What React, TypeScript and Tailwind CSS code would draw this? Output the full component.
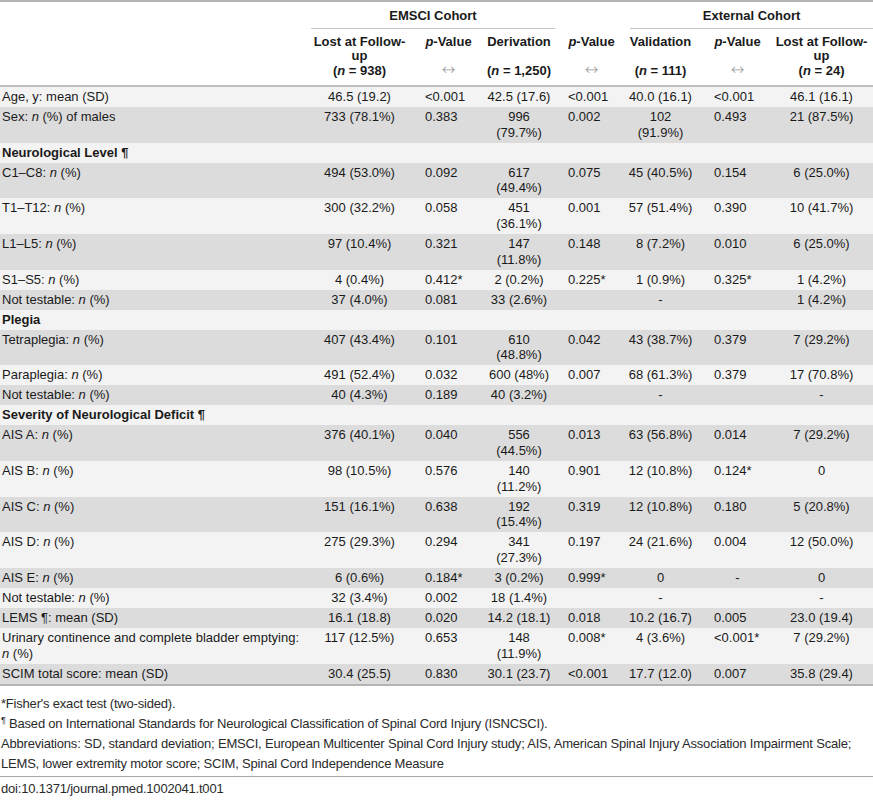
import React from "react";

type Row =
  | { kind: "section"; label: React.ReactNode }
  | { kind: "data"; label: React.ReactNode; values: string[] };

const n = <i>n</i>;

const rows: Row[] = [
  { kind: "data", label: "Age, y: mean (SD)", values: ["46.5 (19.2)", "<0.001", "42.5 (17.6)", "<0.001", "40.0 (16.1)", "<0.001", "46.1 (16.1)"] },
  { kind: "data", label: <>Sex: {n} (%) of males</>, values: ["733 (78.1%)", "0.383", "996\n(79.7%)", "0.002", "102\n(91.9%)", "0.493", "21 (87.5%)"] },
  { kind: "section", label: "Neurological Level ¶" },
  { kind: "data", label: <>C1–C8: {n} (%)</>, values: ["494 (53.0%)", "0.092", "617\n(49.4%)", "0.075", "45 (40.5%)", "0.154", "6 (25.0%)"] },
  { kind: "data", label: <>T1–T12: {n} (%)</>, values: ["300 (32.2%)", "0.058", "451\n(36.1%)", "0.001", "57 (51.4%)", "0.390", "10 (41.7%)"] },
  { kind: "data", label: <>L1–L5: {n} (%)</>, values: ["97 (10.4%)", "0.321", "147\n(11.8%)", "0.148", "8 (7.2%)", "0.010", "6 (25.0%)"] },
  { kind: "data", label: <>S1–S5: {n} (%)</>, values: ["4 (0.4%)", "0.412*", "2 (0.2%)", "0.225*", "1 (0.9%)", "0.325*", "1 (4.2%)"] },
  { kind: "data", label: <>Not testable: {n} (%)</>, values: ["37 (4.0%)", "0.081", "33 (2.6%)", "", "-", "", "1 (4.2%)"] },
  { kind: "section", label: "Plegia" },
  { kind: "data", label: <>Tetraplegia: {n} (%)</>, values: ["407 (43.4%)", "0.101", "610\n(48.8%)", "0.042", "43 (38.7%)", "0.379", "7 (29.2%)"] },
  { kind: "data", label: <>Paraplegia: {n} (%)</>, values: ["491 (52.4%)", "0.032", "600 (48%)", "0.007", "68 (61.3%)", "0.379", "17 (70.8%)"] },
  { kind: "data", label: <>Not testable: {n} (%)</>, values: ["40 (4.3%)", "0.189", "40 (3.2%)", "", "-", "", "-"] },
  { kind: "section", label: "Severity of Neurological Deficit ¶" },
  { kind: "data", label: <>AIS A: {n} (%)</>, values: ["376 (40.1%)", "0.040", "556\n(44.5%)", "0.013", "63 (56.8%)", "0.014", "7 (29.2%)"] },
  { kind: "data", label: <>AIS B: {n} (%)</>, values: ["98 (10.5%)", "0.576", "140\n(11.2%)", "0.901", "12 (10.8%)", "0.124*", "0"] },
  { kind: "data", label: <>AIS C: {n} (%)</>, values: ["151 (16.1%)", "0.638", "192\n(15.4%)", "0.319", "12 (10.8%)", "0.180", "5 (20.8%)"] },
  { kind: "data", label: <>AIS D: {n} (%)</>, values: ["275 (29.3%)", "0.294", "341\n(27.3%)", "0.197", "24 (21.6%)", "0.004", "12 (50.0%)"] },
  { kind: "data", label: <>AIS E: {n} (%)</>, values: ["6 (0.6%)", "0.184*", "3 (0.2%)", "0.999*", "0", "-", "0"] },
  { kind: "data", label: <>Not testable: {n} (%)</>, values: ["32 (3.4%)", "0.002", "18 (1.4%)", "", "-", "", "-"] },
  { kind: "data", label: "LEMS ¶: mean (SD)", values: ["16.1 (18.8)", "0.020", "14.2 (18.1)", "0.018", "10.2 (16.7)", "0.005", "23.0 (19.4)"] },
  { kind: "data", label: <>Urinary continence and complete bladder emptying:<br />{n} (%)</>, values: ["117 (12.5%)", "0.653", "148\n(11.9%)", "0.008*", "4 (3.6%)", "<0.001*", "7 (29.2%)"] },
  { kind: "data", label: "SCIM total score: mean (SD)", values: ["30.4 (25.5)", "0.830", "30.1 (23.7)", "<0.001", "17.7 (12.0)", "0.007", "35.8 (29.4)"] },
];

// padding for the three p-value columns (content box is ~47px wide)
const pPad = ["pl-[14px] pr-[8px]", "pl-[10px] pr-[12px]", "pl-[20px] pr-[9px]"];

const cellClass = (col: number, value: string) => {
  if (col % 2 === 1) {
    const pad = pPad[(col - 1) / 2];
    return `${pad} ${value === "-" ? "text-center" : "text-left"}`;
  }
  return "px-0 text-center";
};

const Arrow = () => (
  <span className="font-['DejaVu_Sans',sans-serif] text-[16px] leading-[12px] font-extralight text-[#9a9a9a]">↔</span>
);

const App = () => {
  return (
    <div className="w-[873px] bg-white font-['Liberation_Sans',Arial,sans-serif] text-[13px] text-[#1a1a1a]">
      <table className="w-[873px] table-fixed border-collapse">
        <colgroup>
          <col className="w-[308px]" />
          <col className="w-[103px]" />
          <col className="w-[69px]" />
          <col className="w-[78px]" />
          <col className="w-[69px]" />
          <col className="w-[67px]" />
          <col className="w-[76px]" />
          <col className="w-[103px]" />
        </colgroup>
        <thead className="bg-white font-bold">
          {/* Cohort groups */}
          <tr className="border-t-2 border-[#b4b4b4]">
            <th />
            <th colSpan={3} className="p-0 align-top">
              <div className="mx-[3px] border-b border-[#c8c8c8] pt-[6px] pb-[5px] leading-[15px]">EMSCI Cohort</div>
            </th>
            <th />
            <th colSpan={3} className="p-0 align-top">
              <div className="ml-[3px] border-b border-[#c8c8c8] pt-[6px] pb-[5px] leading-[15px]">External Cohort</div>
            </th>
          </tr>
          {/* Column titles */}
          <tr className="border-b-2 border-[#c0c0c0] align-top leading-[14.3px]">
            <th className="pt-[6px] pb-[7px]" />
            <th className="px-0 pt-[6px] pb-[7px] text-center">
              Lost at Follow-
              <br />
              up
              <br />
              (<i>n</i> = 938)
            </th>
            <th className={`${pPad[0]} pt-[6px] pb-[7px] text-center`}>
              <i>p</i>-Value
              <br />
              <br />
              <Arrow />
            </th>
            <th className="px-0 pt-[6px] pb-[7px] text-center">
              Derivation
              <br />
              <br />
              (<i>n</i> = 1,250)
            </th>
            <th className={`${pPad[1]} pt-[6px] pb-[7px] text-center`}>
              <i>p</i>-Value
              <br />
              <br />
              <Arrow />
            </th>
            <th className="px-0 pt-[6px] pb-[7px] text-center">
              Validation
              <br />
              <br />
              (<i>n</i> = 111)
            </th>
            <th className={`${pPad[2]} pt-[6px] pb-[7px] text-center`}>
              <i>p</i>-Value
              <br />
              <br />
              <Arrow />
            </th>
            <th className="px-0 pt-[6px] pb-[7px] text-center">
              Lost at Follow-
              <br />
              up
              <br />
              (<i>n</i> = 24)
            </th>
          </tr>
        </thead>
        <tbody className="leading-[15.7px]">
          {rows.map((row, i) => {
            const bg = i % 2 === 0 ? "bg-[#f3f3f3]" : "bg-[#dcdcdc]";
            const last = i === rows.length - 1 ? "border-b-2 border-[#b4b4b4]" : "";
            if (row.kind === "section") {
              return (
                <tr key={i} className={bg}>
                  <td colSpan={8} className="py-[2.15px] pl-[2px] text-left font-bold">
                    {row.label}
                  </td>
                </tr>
              );
            }
            return (
              <tr key={i} className={`${bg} ${last} align-top`}>
                <td className="py-[2.15px] pl-[2px] text-left">{row.label}</td>
                {row.values.map((v, c) => (
                  <td key={c} className={`${cellClass(c, v)} whitespace-pre py-[2.15px]`}>
                    {v}
                  </td>
                ))}
              </tr>
            );
          })}
        </tbody>
      </table>

      {/* Footnotes */}
      <div className="border-b border-[#a8a8a8] pt-[8px] pb-[2px] text-[13px] leading-[20px] tracking-[-0.2px] text-[#2a2a2a]">
        <p className="pl-[1px]">*Fisher's exact test (two-sided).</p>
        <p className="pl-[1px]">
          <sup className="text-[9px]">¶</sup> Based on International Standards for Neurological Classification of Spinal Cord Injury (ISNCSCI).
        </p>
        <p className="whitespace-nowrap pl-[1px]">
          Abbreviations: SD, standard deviation; EMSCI, European Multicenter Spinal Cord Injury study; AIS, American Spinal Injury Association Impairment Scale;
          <br />
          LEMS, lower extremity motor score; SCIM, Spinal Cord Independence Measure
        </p>
      </div>
      <p className="pt-[2px] pl-[1px] text-[13px] leading-[20px] tracking-[-0.2px] text-[#2a2a2a]">
        doi:10.1371/journal.pmed.1002041.t001
      </p>
    </div>
  );
};

export default App;
